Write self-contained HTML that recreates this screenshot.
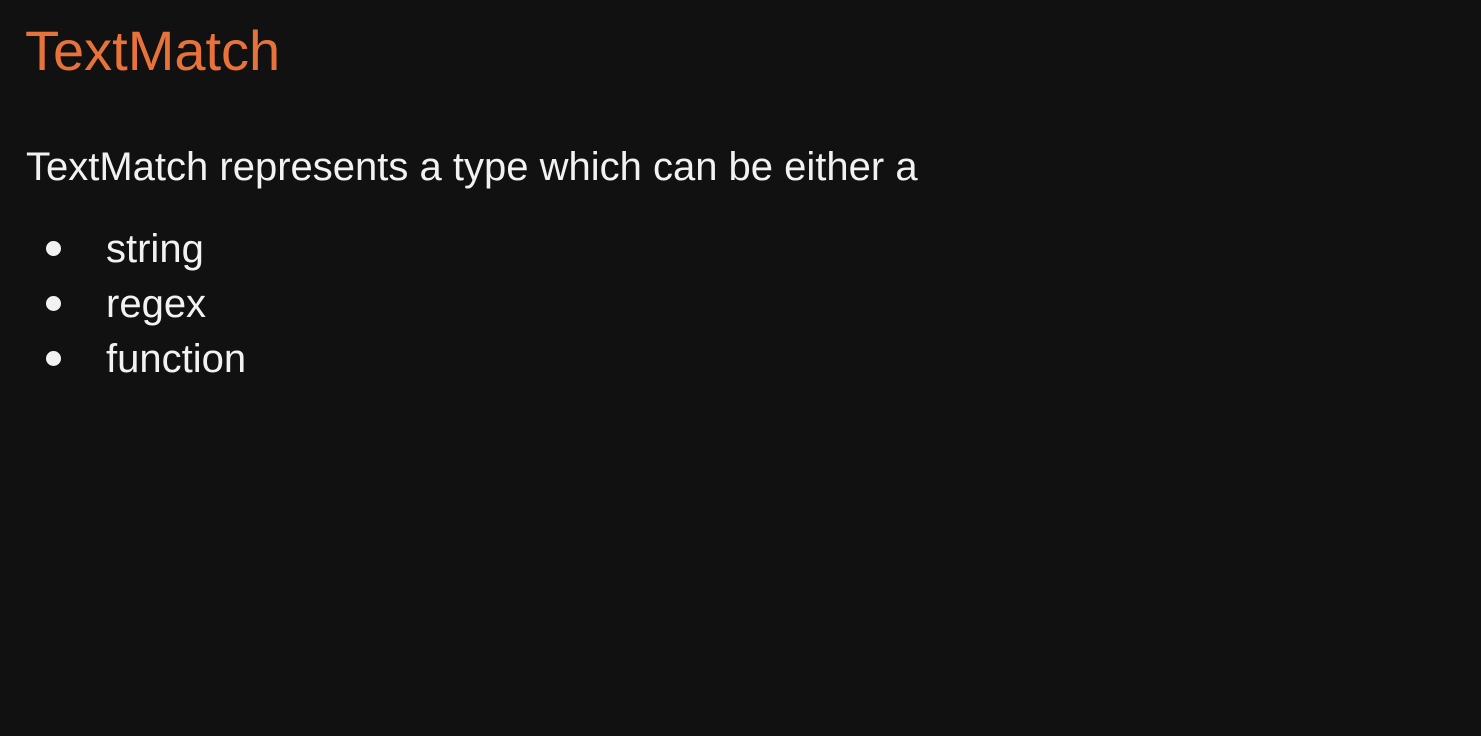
<!DOCTYPE html>
<html><head><style>
html,body{margin:0;padding:0;background:#111111;width:1481px;height:736px;overflow:hidden;font-family:"Liberation Sans",Arial,sans-serif}
.t{position:absolute;left:25px;top:19px;font-size:56px;line-height:64px;color:#e8733a;white-space:nowrap}
.b{position:absolute;left:26px;top:144px;font-size:40px;line-height:46px;color:#f2f2f2;white-space:nowrap}
.li{position:absolute;left:106px;font-size:40px;line-height:46px;color:#f2f2f2}
.dot{position:absolute;left:46px;width:15px;height:15px;border-radius:50%;background:#f2f2f2}
</style></head><body>
<div class="t">TextMatch</div>
<div class="b">TextMatch represents a type which can be either a</div>
<div class="dot" style="top:241px"></div><div class="li" style="top:226px">string</div>
<div class="dot" style="top:296px"></div><div class="li" style="top:281px">regex</div>
<div class="dot" style="top:351px"></div><div class="li" style="top:336px">function</div>
</body></html>
